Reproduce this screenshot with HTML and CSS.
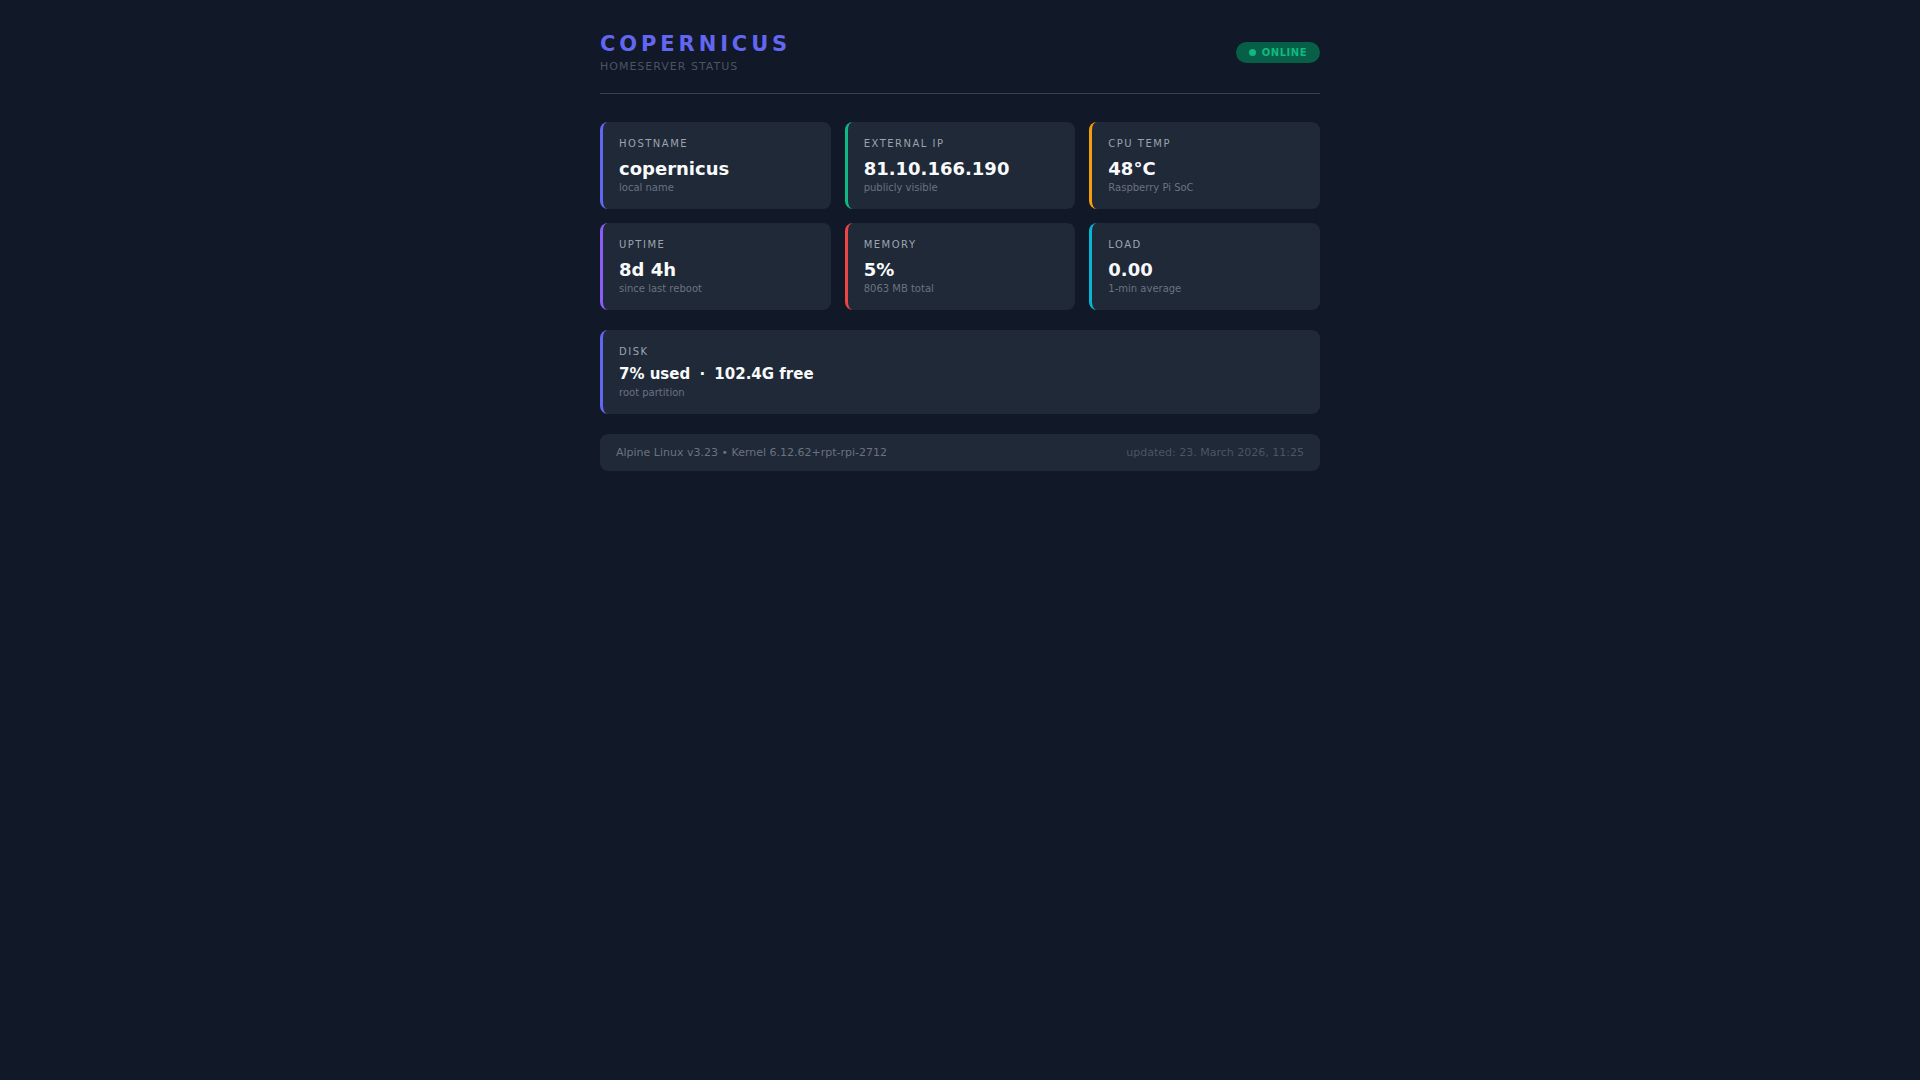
FILE: index.html
```html
<!DOCTYPE html>
<html lang="en">
<head>
  <meta charset="UTF-8">
  <meta name="viewport" content="width=device-width, initial-scale=1.0">
  <title>Copernicus - Homeserver Status</title>
  <link rel="stylesheet" href="styles.css">
</head>
<body>

  <div class="container">
    <div class="header">
      <div>
        <h1>COPERNICUS</h1>
        <div class="subtitle">HOMESERVER STATUS</div>
      </div>
      <div class="badge"><span class="dot"></span>ONLINE</div>
    </div>

    <div class="grid">
      <div class="card indigo">
        <div class="label">HOSTNAME</div>
        <div class="value">copernicus</div>
        <div class="sub">local name</div>
      </div>
      <div class="card green">
        <div class="label">EXTERNAL IP</div>
        <div class="value">81.10.166.190</div>
        <div class="sub">publicly visible</div>
      </div>
      <div class="card amber">
        <div class="label">CPU TEMP</div>
        <div class="value">48°C</div>
        <div class="sub">Raspberry Pi SoC</div>
      </div>
      <div class="card violet">
        <div class="label">UPTIME</div>
        <div class="value">8d 4h</div>
        <div class="sub">since last reboot</div>
      </div>
      <div class="card red">
        <div class="label">MEMORY</div>
        <div class="value">5%</div>
        <div class="sub">8063 MB total</div>
      </div>
      <div class="card cyan">
        <div class="label">LOAD</div>
        <div class="value">0.00</div>
        <div class="sub">1-min average</div>
      </div>
    </div>

    <div class="card indigo disk">
      <div class="label">DISK</div>
      <div class="value">7% used <span class="sep">·</span> 102.4G free</div>
      <div class="sub">root partition</div>
    </div>

    <div class="footer">
      <span>Alpine Linux v3.23 • Kernel 6.12.62+rpt-rpi-2712</span>
      <span class="updated">updated: 23. March 2026, 11:25</span>
    </div>
  </div>

</body>
</html>
```

FILE: styles.css
```css
body {
  margin: 0;
  background-color: #111827;
  color: #f3f4f6;
  font-family: "DejaVu Sans", sans-serif;
}

.container {
  width: 720px;
  margin: 0 auto;
  padding-top: 32px;
}

.header {
  display: flex;
  justify-content: space-between;
  align-items: center;
  padding-bottom: 20px;
  border-bottom: 1px solid #374151;
  margin-bottom: 28px;
}

h1 {
  margin: 0;
  font-size: 21px;
  letter-spacing: 3.9px;
  color: #6366f1;
}

.subtitle {
  margin-top: 4px;
  font-size: 11px;
  letter-spacing: 1px;
  color: #4b5563;
}

.badge {
  display: flex;
  align-items: center;
  gap: 6px;
  padding: 5px 13px;
  border-radius: 999px;
  background-color: #065f46;
  color: #10b981;
  font-size: 10px;
  font-weight: bold;
  letter-spacing: 0.5px;
}

.dot {
  width: 7px;
  height: 7px;
  border-radius: 50%;
  background-color: #10b981;
}

.grid {
  display: grid;
  grid-template-columns: repeat(3, 1fr);
  gap: 14px;
}

.card {
  background-color: #1f2937;
  border-left: 3px solid #6366f1;
  border-radius: 8px;
  padding: 16px;
}

.card.indigo { border-left-color: #6366f1; }
.card.green { border-left-color: #10b981; }
.card.amber { border-left-color: #f59e0b; }
.card.violet { border-left-color: #8b5cf6; }
.card.red { border-left-color: #ef4444; }
.card.cyan { border-left-color: #06b6d4; }

.label {
  font-size: 10px;
  letter-spacing: 1.5px;
  color: #9ca3af;
}

.value {
  margin-top: 9px;
  font-size: 18px;
  font-weight: bold;
  color: #f9fafb;
}

.sub {
  margin-top: 3px;
  font-size: 10px;
  color: #6b7280;
}

.disk {
  margin-top: 20px;
}

.disk .value {
  margin-top: 8px;
  font-size: 15px;
}

.disk .sub {
  margin-top: 4px;
}

.sep {
  margin: 0 4px;
}

.footer {
  display: flex;
  justify-content: space-between;
  margin-top: 20px;
  padding: 12px 16px;
  border-radius: 8px;
  background-color: #1f2937;
  font-size: 11px;
  line-height: 13px;
  color: #6b7280;
}

.footer .updated {
  color: #4b5563;
}
```
